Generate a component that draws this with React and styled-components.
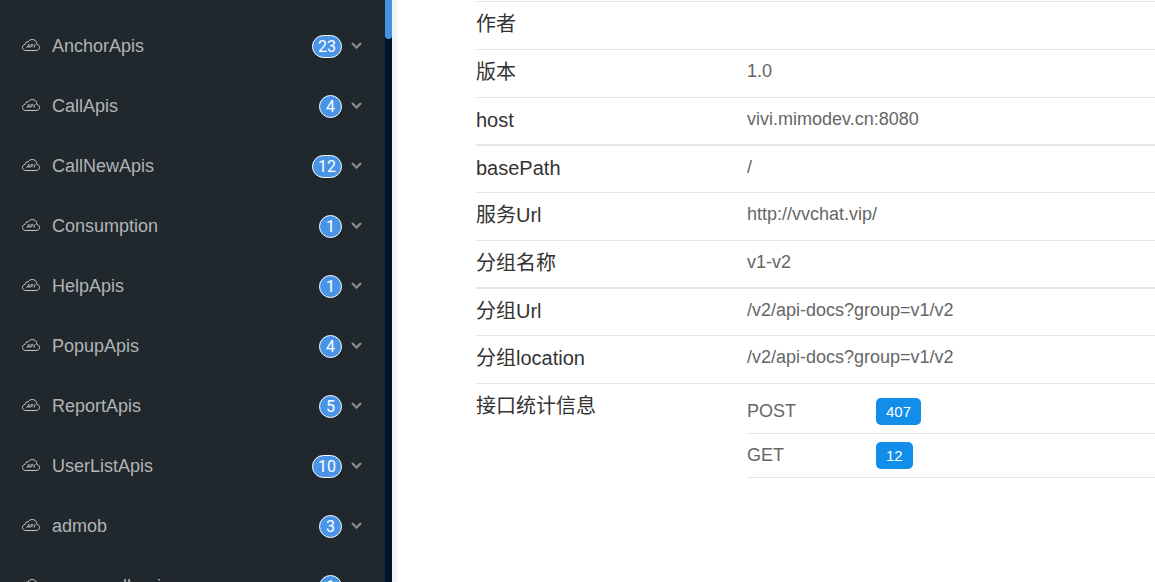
import React from 'react';
import styled, { createGlobalStyle } from 'styled-components';

const GlobalStyle = createGlobalStyle`
  * {
    box-sizing: border-box;
  }
  body {
    margin: 0;
    background-color: #fff;
    font-family: "Liberation Sans", "Noto Sans CJK SC", Arial, sans-serif;
  }
`
const Layout = styled.div`
  display: flex;
  height: 100vh;
  overflow: hidden;
`
const Sidebar = styled.nav`
  flex: 0 0 385px;
  padding-top: 16px;
  background-color: #20282d;
  overflow: hidden;
`
const MenuItem = styled.button`
  display: flex;
  align-items: center;
  width: 100%;
  height: 60px;
  padding: 0 22px;
  border: 0;
  background: none;
  color: #b1b4b6;
  font: inherit;
  font-size: 18px;
  text-align: left;
  cursor: pointer;
`
const MenuText = styled.span`
  flex: 1;
  margin-left: 12px;
`
const Count = styled.span`
  min-width: 23px;
  height: 23px;
  margin-right: 8px;
  padding: 0 5px;
  border: 1px solid #fff;
  border-radius: 12px;
  background-color: #4a94e8;
  color: #fff;
  font-family: Roboto, sans-serif;
  font-size: 16px;
  line-height: 21px;
  text-align: center;
`
const Track = styled.div`
  flex: 0 0 7px;
  background-color: #001529;
`
const Thumb = styled.div`
  height: 39px;
  border-radius: 0 0 4px 4px;
  background-color: #4693e5;
`
const Content = styled.main`
  flex: 1;
  padding: 1px 0 0 79px;
  border-left: 5px solid #f0f2f5;
  overflow: hidden;
`
const InfoTable = styled.table`
  width: 100%;
  border-spacing: 0;
  border-top: 1px solid #e6e6e6;
  table-layout: fixed;
`
const InfoRow = styled.tr`
  height: ${(props) => (props.$short ? '47px' : '48px')};

  > * {
    border-bottom: ${(props) => (props.$last ? '0' : props.$thick ? '2px' : '1px')} solid #e6e6e6;
  }
`
const Label = styled.th`
  width: 271px;
  padding: 8px 0 0;
  color: #333;
  font-size: 20px;
  font-weight: 400;
  line-height: 28px;
  text-align: left;
  vertical-align: top;
`
const Value = styled.td`
  padding: ${(props) => (props.$nested ? '6px 0 0' : '8px 0 0')};
  color: #666;
  font-size: 18px;
  line-height: 26px;
  vertical-align: top;
`
const StatTable = styled.table`
  width: 100%;
  border-spacing: 0;
  table-layout: fixed;
`
const StatCell = styled.td`
  width: ${(props) => (props.$name ? '129px' : 'auto')};
  height: 44px;
  padding: ${(props) => (props.$name ? '0 0 2px' : '0')};
  border-bottom: 1px solid #e6e6e6;
`
const Badge = styled.span`
  display: block;
  width: fit-content;
  padding: 0 10px;
  border-radius: 5px;
  background-color: #108ee9;
  color: #fff;
  font-size: 15px;
  line-height: 27px;
`

const menu = [
  { name: 'AnchorApis', count: 23 },
  { name: 'CallApis', count: 4 },
  { name: 'CallNewApis', count: 12 },
  { name: 'Consumption', count: 1 },
  { name: 'HelpApis', count: 1 },
  { name: 'PopupApis', count: 4 },
  { name: 'ReportApis', count: 5 },
  { name: 'UserListApis', count: 10 },
  { name: 'admob', count: 3 },
  { name: 'agora-call-api', count: 1 },
]

const info = [
  { label: '作者', value: '' },
  { label: '版本', value: '1.0' },
  { label: 'host', value: 'vivi.mimodev.cn:8080', thick: true },
  { label: 'basePath', value: '/', short: true },
  { label: '服务Url', value: 'http://vvchat.vip/' },
  { label: '分组名称', value: 'v1-v2', thick: true },
  { label: '分组Url', value: '/v2/api-docs?group=v1/v2', short: true },
  { label: '分组location', value: '/v2/api-docs?group=v1/v2' },
]

const stats = [
  { method: 'POST', total: 407 },
  { method: 'GET', total: 12 },
]

const CloudIcon = () => (
  <svg width="18" height="14" viewBox="0 0 18 14" fill="none" stroke="#c3c6c8" aria-hidden="true">
    <path d="M4 11.500h10c2 0 3.500-1.200 3.500-3.100 0-1.700-1.200-2.700-2.600-3C14.900 2.300 12.800.5 10.200.5 8.300.5 6.800 1.500 6 3 4.500 2.500 3.200 3.700 3.300 5.300 1.500 5.600.5 6.800.5 8.400c0 1.900 1.500 3.100 3.500 3.100z" />
    <path strokeWidth="0.9" d="M4.800 8.700 7 5.300v3.400M5.500 7.700H7M8.300 8.700l1-3.300h1.300c1 0 .6 1.800-.4 1.800H9M12 8.700l1.100-3.400" />
  </svg>
)

const ArrowIcon = () => (
  <svg width="13" height="10" viewBox="0 0 13 10" fill="none" stroke="#858a8d" strokeWidth="2.3" aria-hidden="true">
    <path d="M2 2l4.500 4.500L11 2" />
  </svg>
)

const App = () => {
  return (
    <Layout>
      <GlobalStyle />
      <Sidebar>
        {menu.map((item) => (
          <MenuItem key={item.name} type="button">
            <CloudIcon />
            <MenuText>{item.name}</MenuText>
            <Count>{item.count}</Count>
            <ArrowIcon />
          </MenuItem>
        ))}
      </Sidebar>
      <Track>
        <Thumb />
      </Track>
      <Content>
        <InfoTable>
          <tbody>
            {info.map((row) => (
              <InfoRow key={row.label} $thick={row.thick} $short={row.short}>
                <Label scope="row">{row.label}</Label>
                <Value>{row.value}</Value>
              </InfoRow>
            ))}
            <InfoRow $last>
              <Label scope="row">接口统计信息</Label>
              <Value $nested>
                <StatTable>
                  <tbody>
                    {stats.map((stat) => (
                      <tr key={stat.method}>
                        <StatCell $name>{stat.method}</StatCell>
                        <StatCell>
                          <Badge>{stat.total}</Badge>
                        </StatCell>
                      </tr>
                    ))}
                  </tbody>
                </StatTable>
              </Value>
            </InfoRow>
          </tbody>
        </InfoTable>
      </Content>
    </Layout>
  );
};

export default App;
